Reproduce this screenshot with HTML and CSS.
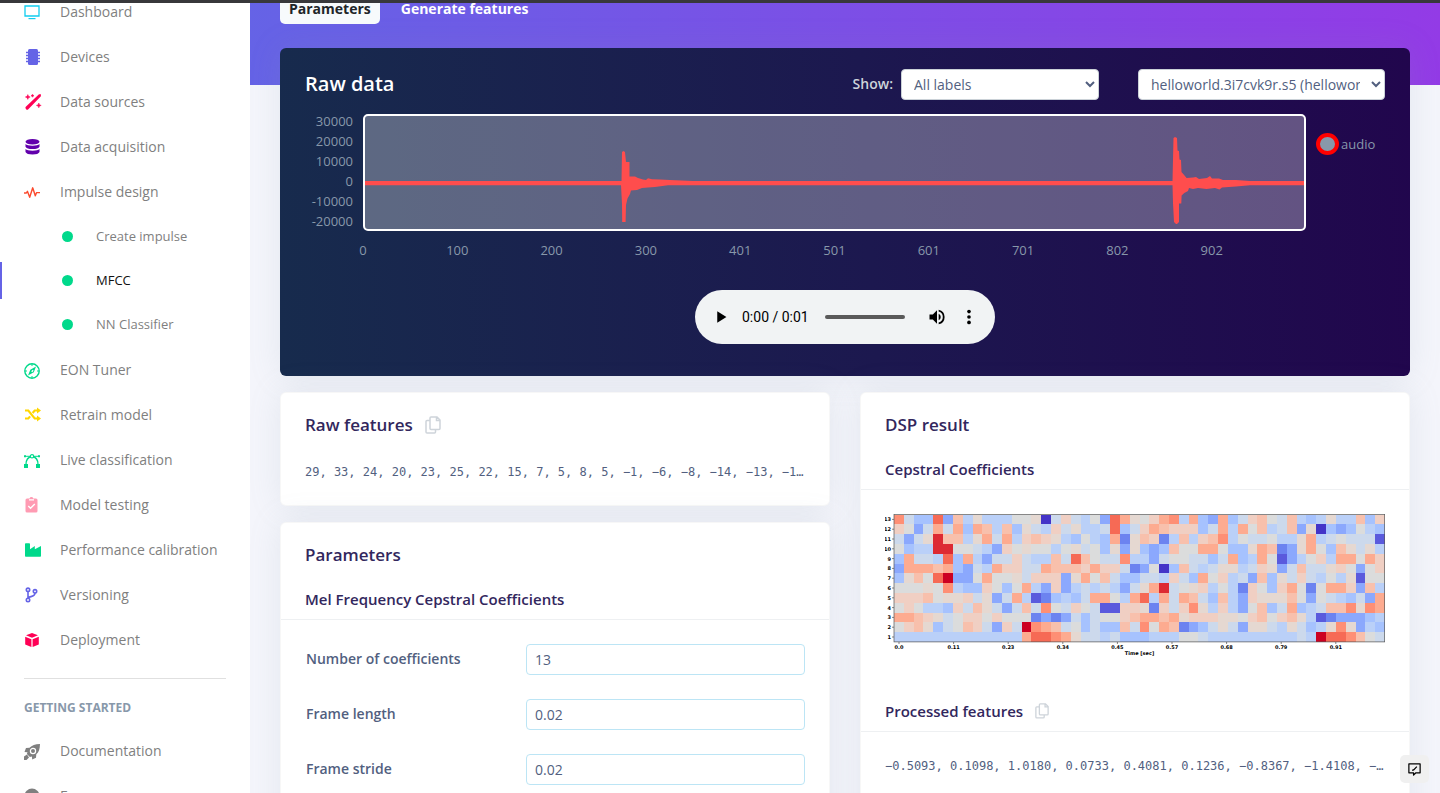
FILE: index.html
```html
<!DOCTYPE html>
<html lang="en">
<head>
<meta charset="utf-8">
<title>MFCC - Impulse design</title>
<link rel="stylesheet" href="styles.css">
</head>
<body>
<div class="topbar"></div>
<div class="app">
  <nav class="sidebar" aria-label="Project">
    <ul class="nav">
      <li><a class="nav-link" href="#"><svg class="icon cyan" viewBox="0 0 16 16"><path d="M1 2h14v10H1z" fill="none" stroke="currentColor" stroke-width="1.3"/><path d="M4.500 14h7v1.200h-7z"/></svg>Dashboard</a></li>
      <li><a class="nav-link" href="#"><svg class="icon indigo shift" viewBox="0 0 16 16"><rect x="3" y="0" width="10" height="16" rx="1.500"/><path d="M1 3.500h14M1 6.500h14M1 9.500h14M1 12.500h14" stroke="currentColor" stroke-width="1.300" fill="none"/></svg>Devices</a></li>
      <li><a class="nav-link" href="#"><svg class="icon pink shift" viewBox="0 0 16 16"><path d="M14 .3 .8 12.800a1.500 1.500 0 0 0 0 2l.3.400a1.500 1.500 0 0 0 2.200 0L15.900 2.200V.3z"/><path d="m2.800.6.7 1.700 1.700.7-1.700.7-.7 1.700-.7-1.700L.4 3l1.700-.7zM7.500.2l.5 1 1 .5-1 .5-.5 1-.5-1-1-.5 1-.5zM13.800 9l.7 1.700 1.700.7-1.700.7-.7 1.700-.7-1.700-1.700-.7 1.700-.7z" stroke="currentColor" stroke-width=".5"/></svg>Data sources</a></li>
      <li><a class="nav-link" href="#"><svg class="icon purple" viewBox="0 0 16 16"><ellipse cx="8.500" cy="2.800" rx="7" ry="2.800"/><path d="M1.500 5q1.600 1.700 7 1.700T15.500 5v2.800q-1.200 2.300-7 2.300t-7-2.300zM1.500 10q1.600 1.700 7 1.700T15.500 10v3q-1.200 2.500-7 2.500t-7-2.500z"/></svg>Data acquisition</a></li>
      <li><a class="nav-link" href="#"><svg class="icon orange low" viewBox="0 0 16 16"><path d="M0 8h2.400l1-1.700 2.300 6 3-9.500 2.600 8 1.300-3.200H16" fill="none" stroke="currentColor" stroke-width="1.400" stroke-linejoin="round"/></svg>Impulse design</a>
        <ul class="subnav">
          <li><a class="sub-link" href="#"><i class="dot"></i>Create impulse</a></li>
          <li><a class="sub-link active" href="#" aria-current="page"><i class="dot"></i>MFCC</a></li>
          <li><a class="sub-link" href="#"><i class="dot"></i>NN Classifier</a></li>
        </ul></li>
      <li><a class="nav-link" href="#"><svg class="icon green low" viewBox="0 0 16 16"><circle cx="8" cy="8" r="7.200" fill="none" stroke="currentColor" stroke-width="1.400"/><path d="M12 3.500 9.800 9.300 4 12.500 6.300 6.700zM8.700 6.800 7.200 8.300l1 .9 1.400-1.500z" fill-rule="evenodd"/><path d="M8 1v2M8 13v2M1 8h2M13 8h2" stroke="currentColor"/></svg>EON Tuner</a></li>
      <li><a class="nav-link" href="#"><svg class="icon yellow shift" viewBox="0 0 16 16"><path d="M0 3.500h3.300L9.700 11.500H13M0 11.500h3.300l1.800-2.200M7.600 6l2.100-2.500H13" fill="none" stroke="currentColor" stroke-width="2.100"/><path d="M12 .5 16 3.500 12 6.500zM12 8.500l4 3-4 3z"/></svg>Retrain model</a></li>
      <li><a class="nav-link" href="#"><svg class="icon green low" viewBox="0 0 16 16"><path d="M2 11.500C2 7 4 4 8 3.500c4 .5 6 3.500 6 8" fill="none" stroke="currentColor" stroke-width="1.300"/><path d="M1 3.300h14" stroke="currentColor"/><circle cx="8" cy="3.300" r="1.700" fill="#fff" stroke="currentColor" stroke-width="1.200"/><path d="M0 11h4v4H0zM12 11h4v4h-4zM0 2.300h2v2H0zM14 2.300h2v2h-2z"/></svg>Live classification</a></li>
      <li><a class="nav-link" href="#"><svg class="icon rose" viewBox="0 0 16 16"><path d="M3 1.500h2.500a2 2 0 0 1 3.800 0H12a1.500 1.500 0 0 1 1.500 1.500v11a1.500 1.500 0 0 1-1.500 1.500H3A1.500 1.500 0 0 1 1.500 14V3A1.500 1.500 0 0 1 3 1.500z"/><path d="m4.300 9 2.200 2.200 4.300-4.300M5 2.900h5" fill="none" stroke="#fff" stroke-width="1.400"/></svg>Model testing</a></li>
      <li><a class="nav-link" href="#"><svg class="icon green shift" viewBox="0 0 16 16"><path d="M0 2q0-.8.8-.8h3.400q.8 0 .8.800v5.300L9.800 4v3.300L16 4v10q0 .8-.8.8H.8q-.8 0-.8-.8z"/></svg>Performance calibration</a></li>
      <li><a class="nav-link" href="#"><svg class="icon indigo" viewBox="0 0 16 16"><g fill="none" stroke="currentColor" stroke-width="1.600"><circle cx="4" cy="2.800" r="1.700"/><circle cx="4" cy="13" r="1.700"/><circle cx="11" cy="4.300" r="1.700"/><path d="M4 4.500v6.800M11 6c0 3.500-3 3-7 4.500"/></g></svg>Versioning</a></li>
      <li><a class="nav-link" href="#"><svg class="icon pink" viewBox="0 0 16 16"><path d="M8 1 14 3.300 8 5.800 2 3.300zM1.200 4.700 7.400 7.300V15L1.200 12.500zM14.800 4.700 8.600 7.300V15l6.200-2.500z"/></svg>Deployment</a></li>
    </ul>
    <hr class="divider">
    <h6 class="nav-heading">Getting started</h6>
    <ul class="nav-more">
      <li><a class="nav-link" href="#"><svg class="icon gray low" viewBox="0 0 16 16"><path d="M16 0C11 .2 8 1.300 5.500 3.700L2 4 .5 8l3 .2-.6 1.800 3 3 2-.5.3 3 3.800-1.800.3-3.400C15 8 15.800 5 16 0z"/><circle cx="9" cy="7" r="2.600" fill="none" stroke="#fff" stroke-width="1.200"/><path d="M3 10.500 0 12.500V16h2.500l2.500-2.500z"/></svg>Documentation</a></li>
      <li><a class="nav-link" href="#"><svg class="icon gray" viewBox="0 0 16 16"><circle cx="8" cy="8" r="7.500"/></svg>Forum</a></li>
    </ul>
  </nav>

  <main class="main">
    <header class="hero">
      <div class="tabs">
        <a class="tab current" href="#">Parameters</a>
        <a class="tab" href="#">Generate features</a>
      </div>
    </header>
    <div class="content">
      <section class="raw-card">
        <div class="raw-head">
          <h2 class="raw-title">Raw data</h2>
          <label class="show-label" for="labels">Show:</label>
          <select class="select select-label" id="labels"><option>All labels</option></select>
          <select class="select select-sample" aria-label="Sample"><option>helloworld.3i7cvk9r.s5 (helloworld)</option></select>
        </div>
        <div class="chart">
          <ul class="y-axis"><li>30000</li><li>20000</li><li>10000</li><li>0</li><li>-10000</li><li>-20000</li></ul>
          <div class="plot">
            <svg class="wave" viewBox="0 0 939 113" preserveAspectRatio="none" role="img" aria-label="Audio waveform">
              <path d="M0 65H256.500L257 36 258.500 35 260 36 261 46H264.500V60.500L270 60.500 273 62 278 63.500 281 64 283 62.300 287 63.300 295 63.500 305 64 328 65H807.500L808.500 22 810 21 812 22 812.500 34.500 814 35 814.500 43.500 816 44 816.500 56 819.300 59.300 821.600 62 828 61.500 831 61 834 63 842 62 845 60 847 62.500 854 62.500 858 64 871 64 885 65H939V69.300H885L871 70.500 857 71.500 854.500 73.600 850 72 841.500 73 833 72 828 73 824 72 823 75 819.300 77 816.600 79.600 816.300 87.600H814V106L812 108H811L809 106 808 87 807.500 69.300H303L290 71 283 71.500 277 72 272 74 266 74.500 265 78 262.500 82.500 261 89 260.600 106H257.200L257 88 256 69.300H0z"/>
            </svg>
          </div>
          <div class="legend"><i class="legend-dot"></i>audio</div>
          <ul class="x-axis"><li><span>0</span></li><li><span>100</span></li><li><span>200</span></li><li><span>300</span></li><li><span>401</span></li><li><span>501</span></li><li><span>601</span></li><li><span>701</span></li><li><span>802</span></li><li><span>902</span></li></ul>
        </div>
        <div class="player">
          <button class="player-btn" aria-label="Play"><svg viewBox="0 0 24 24"><path d="M7.500 5v14L18.500 12z"/></svg></button>
          <span class="time">0:00 / 0:01</span>
          <input class="seek" type="range" min="0" max="1" value="0" aria-label="Seek">
          <button class="player-btn" aria-label="Mute"><svg viewBox="0 0 24 24"><path d="M3 9v6h4l5 5V4L7 9zm13.500 3A4.500 4.500 0 0 0 14 8v8a4.500 4.500 0 0 0 2.500-4zM14 3.200v2.100a7 7 0 0 1 0 13.400v2.100a9 9 0 0 0 0-17.600z"/></svg></button>
          <button class="player-btn" aria-label="More options"><svg viewBox="0 0 24 24"><circle cx="12" cy="5.500" r="2.200"/><circle cx="12" cy="12" r="2.200"/><circle cx="12" cy="18.500" r="2.200"/></svg></button>
        </div>
      </section>

      <div class="columns">
        <div class="column">
          <section class="card raw-features">
            <h3 class="card-title">Raw features <button class="copy" aria-label="Copy raw features"><svg viewBox="0 0 16 18"><path d="M6 1h6l3 3v8.500a1 1 0 0 1-1 1H6a1 1 0 0 1-1-1V2a1 1 0 0 1 1-1zM11.500 1v3.500H15M5 4.500H2a1 1 0 0 0-1 1V16a1 1 0 0 0 1 1h7.500a1 1 0 0 0 1-1v-2.500"/></svg></button></h3>
            <p class="features">29, 33, 24, 20, 23, 25, 22, 15, 7, 5, 8, 5, −1, −6, −8, −14, −13, −15, −20, −18</p>
          </section>
          <section class="card">
            <h3 class="card-title">Parameters</h3>
            <h4 class="card-subtitle">Mel Frequency Cepstral Coefficients</h4>
            <form class="params">
              <div class="field"><label for="coefs">Number of coefficients</label><input id="coefs" type="text" value="13"></div>
              <div class="field"><label for="flen">Frame length</label><input id="flen" type="text" value="0.02"></div>
              <div class="field"><label for="fstride">Frame stride</label><input id="fstride" type="text" value="0.02"></div>
            </form>
          </section>
        </div>
        <div class="column">
          <section class="card dsp">
            <h3 class="card-title">DSP result</h3>
            <h4 class="card-subtitle">Cepstral Coefficients</h4>
            <svg class="heatmap" id="heatmap" viewBox="0 0 500 146" role="img" aria-label="Cepstral coefficients over time"></svg>
            <h4 class="card-subtitle">Processed features <button class="copy small" aria-label="Copy processed features"><svg viewBox="0 0 16 18"><path d="M6 1h6l3 3v8.500a1 1 0 0 1-1 1H6a1 1 0 0 1-1-1V2a1 1 0 0 1 1-1zM11.500 1v3.500H15M5 4.500H2a1 1 0 0 0-1 1V16a1 1 0 0 0 1 1h7.500a1 1 0 0 0 1-1v-2.500"/></svg></button></h4>
            <p class="features">−0.5093, 0.1098, 1.0180, 0.0733, 0.4081, 0.1236, −0.8367, −1.4108, −0.2291, 0.3310</p>
          </section>
        </div>
      </div>
    </div>
  </main>
</div>
<button class="feedback" aria-label="Feedback"><svg viewBox="0 0 16 16"><path d="M2 2h12v9.500H9.500L7 14v-2.500H2z" fill="none" stroke="currentColor" stroke-width="1.300" stroke-linejoin="round"/><path d="m5.500 9 1.600-.6L10.500 5" fill="none" stroke="currentColor" stroke-width="1.300"/></svg></button>
<script src="heatmap.js"></script>
</body>
</html>
```

FILE: styles.css
```css
* { box-sizing: border-box; }
body {
  margin: 0;
  height: 100vh;
  overflow: hidden;
  display: flex;
  flex-direction: column;
  background: #f4f5fb;
  color: #525f7f;
  font: 14px/20px "Open Sans", "Noto Sans", sans-serif;
}
ul { list-style: none; margin: 0; padding: 0; }
h2, h3, h4, h6, p { margin: 0; }
button { border: 0; padding: 0; background: none; color: inherit; font: inherit; }
svg { display: block; fill: currentColor; }

.topbar { flex: none; height: 3px; background: #38383b; }
.app { flex: 1; min-height: 0; display: flex; }

.sidebar { flex: none; width: 250px; background: #fff; overflow: hidden; }
.nav { margin-top: -14px; }
.nav-link, .sub-link { display: flex; align-items: center; color: #7f7f7f; text-decoration: none; }
.nav-link { height: 45px; padding-left: 24px; gap: 20px; }
.icon { width: 16px; height: 16px; flex: none; overflow: visible; }
.shift { margin-left: 1px; margin-right: -1px; }
.low { margin-top: 3px; }
.subnav { padding-bottom: 1px; }
.sub-link { height: 44px; padding-left: 62px; gap: 23px; font-size: 13px; }
.sub-link.active { color: #111; background: linear-gradient(#6563e6, #6563e6) left center / 2px 37px no-repeat; }
.dot { width: 11px; height: 11px; border-radius: 50%; background: #00d98b; }
.cyan { color: #11cdef; }
.indigo { color: #6563e6; }
.pink { color: #ff0055; }
.purple { color: #6200ac; }
.orange { color: #fb4a2e; }
.green { color: #00d98b; }
.yellow { color: #ffd600; }
.rose { color: #ff9bb3; }
.gray { color: #7f7f7f; }
.divider { margin: 16px 24px 0; border: 0; border-top: 1px solid #e0e0e0; }
.nav-heading { padding: 19px 24px 0; margin-bottom: 10px; color: #8898aa; font-size: 12px; line-height: 20px; text-transform: uppercase; }

.main { flex: 1; min-width: 0; overflow: hidden; }
.hero { height: 82px; padding: 0 30px; background: linear-gradient(87deg, #6563e6, #933be6); }
.tabs { display: flex; gap: 12px; }
.tab { padding: 0 9px; height: 21px; line-height: 12px; border-radius: 0 0 5px 5px; color: #fff; font-weight: 700; text-decoration: none; }
.tab.current { background: #f7fafc; color: #212529; }
.content { margin-top: -37px; padding: 0 30px; }

.raw-card { height: 328px; padding: 21px 25px 0; border-radius: 6px; background: linear-gradient(87deg, #172b4d, #1c184f 52%, #21064d); box-shadow: 0 0 32px rgba(136, 152, 170, .15); }
.raw-head { display: flex; align-items: center; height: 31px; }
.raw-title { margin-right: auto; padding-bottom: 2px; color: #fff; font-size: 20px; font-weight: 600; line-height: 28px; }
.show-label { margin-right: 8px; padding-bottom: 1px; color: #ced4da; font-weight: 600; }
.select { height: 31px; padding: 0 0 0 8px; border: 1px solid #cad1d7; border-radius: 4px; background-color: #fff; color: #525f7f; font: inherit; }
.select-label { width: 198px; margin-right: 39px; }
.select-sample { width: 247px; padding-right: 8px; }

.chart { display: grid; grid-template-columns: 48px minmax(0, 1fr) 69px; column-gap: 10px; align-items: center; margin-top: 13px; color: #8898aa; font-size: 13px; }
.y-axis { margin-top: -2px; text-align: right; }
.plot { height: 117px; border: 2px solid #fff; border-radius: 5px; background: rgba(255, 255, 255, .3); }
.wave { width: 100%; height: 100%; fill: #ff4d4d; }
.legend { align-self: start; display: flex; align-items: center; gap: 2px; margin-top: 20px; }
.legend-dot { width: 23px; height: 22px; border: 4px solid red; border-radius: 50%; background: #8898aa; }
.x-axis { grid-column: 2; display: flex; margin-top: 9px; }
.x-axis li { flex: 0 0 10%; }
.x-axis span { display: flex; justify-content: center; width: 0; }

.player { display: flex; align-items: center; width: 300px; height: 54px; margin: 30px auto 0; padding: 0 16px; border-radius: 27px; background: #f1f3f4; color: #000; }
.player-btn { flex: none; width: 20px; height: 20px; }
.time { margin: 0 16px 0 11px; font: 14px/20px Roboto, sans-serif; white-space: nowrap; }
.seek { flex: 1; min-width: 0; height: 4px; margin: 0 22px 0 0; border-radius: 2px; background: #5a5a5a; appearance: none; }
.seek::-webkit-slider-thumb { appearance: none; width: 0; height: 0; }
.player-btn + .player-btn { margin-left: 12px; }

.columns { display: grid; grid-template-columns: repeat(2, minmax(0, 1fr)); column-gap: 30px; margin-top: 16px; }
.column { display: flex; flex-direction: column; gap: 16px; }
.card { border: 1px solid rgba(0, 0, 0, .03); border-radius: 6px; background: #fff; box-shadow: 0 0 32px rgba(136, 152, 170, .15); }
.raw-features { padding-bottom: 23px; }
.dsp { flex: 1; padding-bottom: 40px; }
.card-title { display: flex; align-items: center; gap: 12px; padding: 19px 24px 0; color: #32275d; font-size: 17px; line-height: 26px; font-weight: 600; }
.card-subtitle { display: flex; align-items: center; gap: 12px; padding: 21px 24px 10px; border-bottom: 1px solid #eef0f2; color: #32275d; font-size: 15px; line-height: 20px; font-weight: 600; }
.copy { width: 16px; color: #ced4da; }
.copy.small { width: 14px; }
.copy svg { fill: none; stroke: currentColor; stroke-width: 1.5; overflow: visible; }
.features { margin-right: 24px; padding: 24px 0 0 24px; overflow: hidden; font: 12px/20px "DejaVu Sans Mono", monospace; text-overflow: ellipsis; white-space: nowrap; }
.params { padding: 24px; }
.field { display: grid; grid-template-columns: 220px 1fr; align-items: center; margin-bottom: 24px; padding-left: 1px; }
.field label { padding-bottom: 2px; font-weight: 600; }
.field input { min-width: 0; height: 31px; padding: 0 8px; border: 1px solid #bce5f5; border-radius: 4px; color: #525f7f; font: inherit; }
.heatmap { width: calc(100% - 48px); margin: 24px 24px 20px; fill: #000; font: 700 5px "DejaVu Sans", sans-serif; }
.cell { shape-rendering: crispEdges; }

.feedback { position: fixed; right: 11px; bottom: 10px; display: grid; place-items: center; width: 29px; height: 28px; border-radius: 5px; background: #f0f0f0; color: #000; }
.feedback svg { width: 15px; height: 15px; }
```

FILE: heatmap.js
```js
const palette = {
  0: '#4434c8', 1: '#5a5add', 2: '#6c83f0', 3: '#8ba8fd', 4: '#a6c2fe', 5: '#bad0f8',
  6: '#ccd9ec', 7: '#dbdcdc', 8: '#e5d8d1', 9: '#f0cfc3', a: '#f8c0ac', b: '#fdab90',
  c: '#fe8f75', d: '#f66a55', e: '#dd2a33', f: '#cc0022'
};
// One string per coefficient, 13 down to 1; one digit per frame.
const rows = [
  'c644d3a585557780696573db879bc5b43b469a76a545855a49',
  '9736b6b4ba5a4865968556d469ba99946b5b7a56a380434754',
  '6368eaa58b6b59a9854754b28a925a59ac57667558b5676661',
  '7455ee7765397877578674838434a77bb7448ba238b74a8685',
  '4b665d4b53669655a6da766c5536776646b45b7135795bb7b9',
  '3bbbab4365b9966baaa9b99623704a65688569836a66897379',
  '48a7df337b778699938b7a644665964b79563a486965758177',
  '77787c5449747b539356565368be678957529749b727bb93a5',
  '999a78896836b5124546bb75bd5b6ba64a539888a73765463b',
  '79755496a8636a6c76976119982969c859537a46b456aac8cb',
  'bba986799797772323646779abbab89998879a79a851233345',
  '79a8467a96396fcba674644a6c7ba2346863886586458c8354',
  '5555555555555bddcb8665644455577655555555565fddca76'
];
const left = 9, top0 = 0.5, w = 9.82, h = 9.8;
const out = [];
rows.forEach((row, r) => {
  [...row].forEach((level, c) => {
    out.push(`<rect class="cell" x="${left + c * w}" y="${top0 + r * h}" width="${w}" height="${h}" fill="${palette[level]}"/>`);
  });
  out.push(`<text x="6" y="${top0 + r * h + 6.8}" text-anchor="end">${13 - r}</text>`);
  out.push(`<path d="M7 ${top0 + (r + 0.5) * h}h2" stroke="#333" stroke-width=".6"/>`);
});
out.push(`<rect x="${left}" y="${top0}" width="490.7" height="127.4" fill="none" stroke="#555" stroke-width=".7"/>`);
['0.0', '0.11', '0.23', '0.34', '0.45', '0.57', '0.68', '0.79', '0.91'].forEach((label, i) => {
  const x = 14 + i * 54.6;
  out.push(`<path d="M${x} 128v2" stroke="#333" stroke-width=".6"/><text x="${x}" y="135" text-anchor="middle">${label}</text>`);
});
out.push('<text x="254.500" y="141" text-anchor="middle">Time [sec]</text>');
document.getElementById('heatmap').innerHTML = out.join('');
```
